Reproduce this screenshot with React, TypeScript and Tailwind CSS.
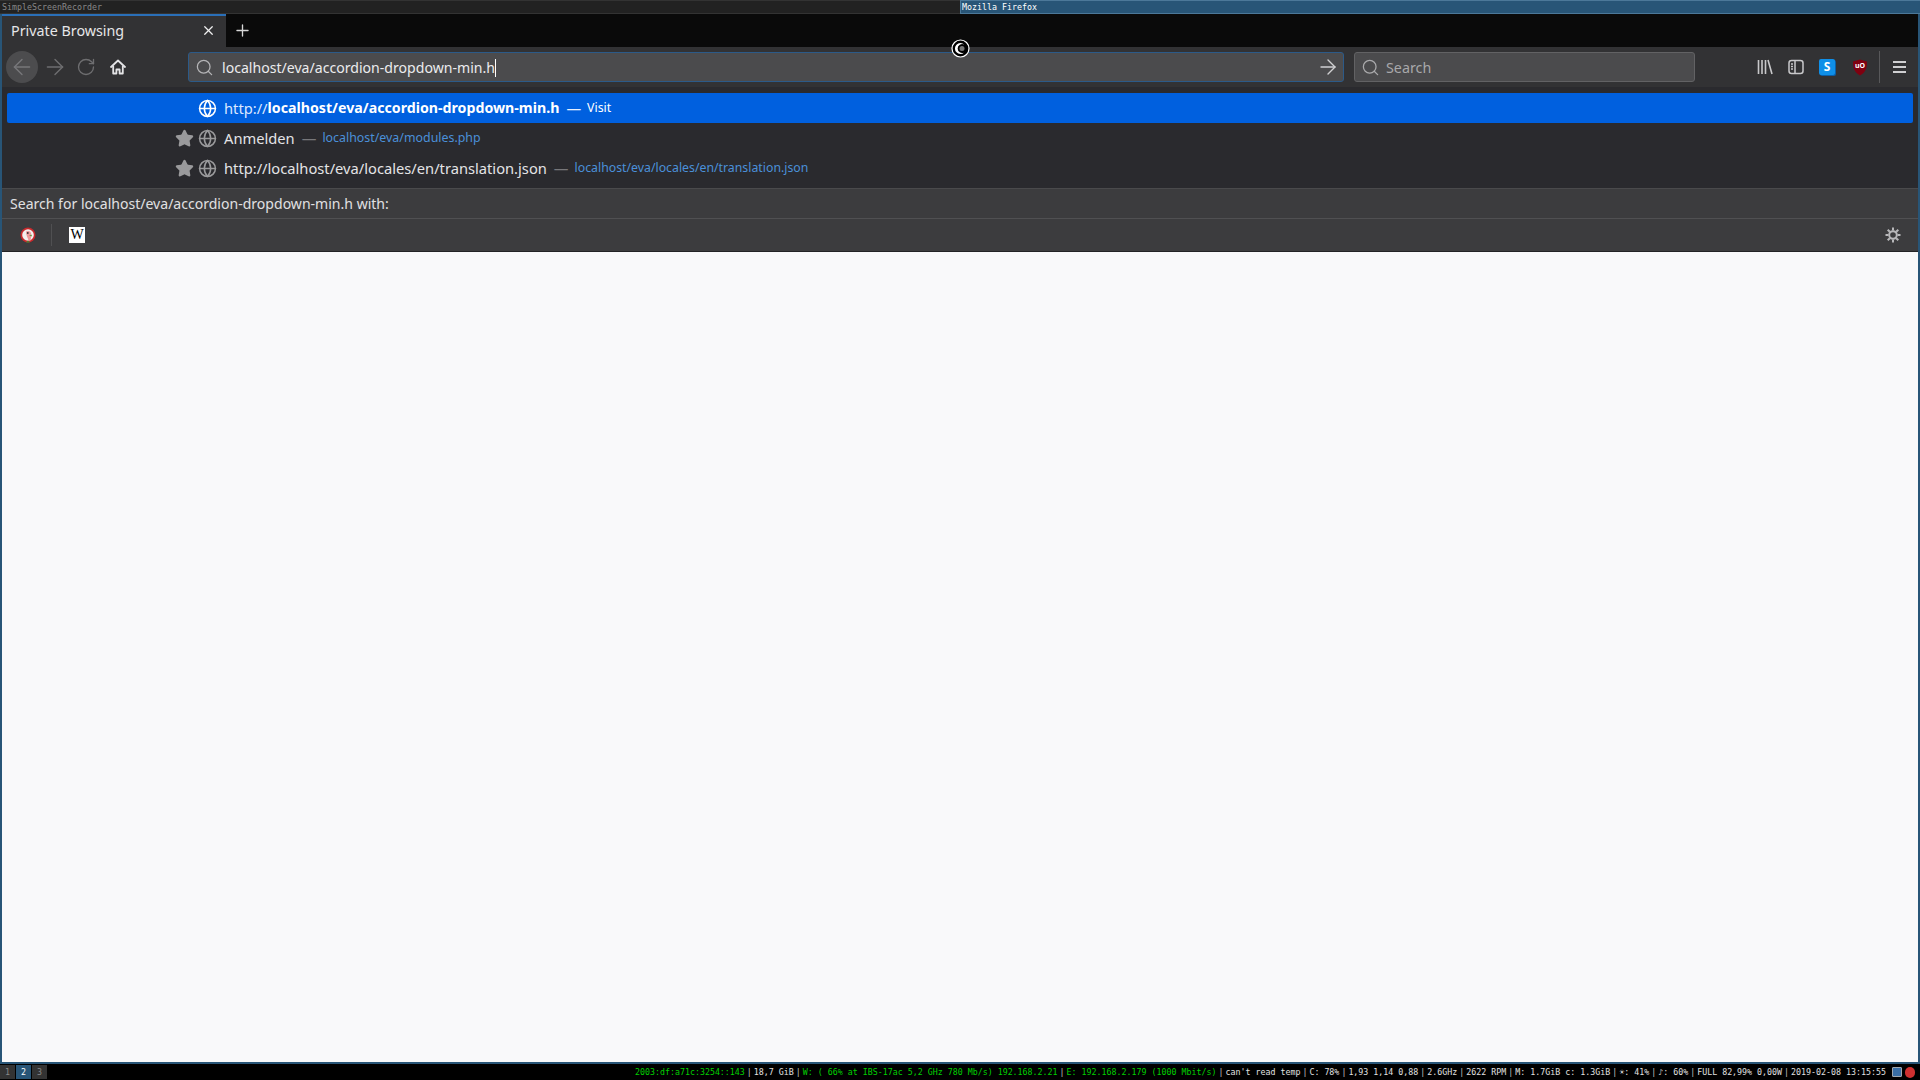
import { ArrowLeft, ArrowRight, Globe, Plus, RotateCw, Search, Star, X } from 'lucide-react';

const sans = "font-['Noto_Sans','Open_Sans',sans-serif]";
const mono = "font-['DejaVu_Sans_Mono',monospace]";

const statusBlocks: { text: string; color: string }[] = [
  { text: '2003:df:a71c:3254::143', color: 'text-[#00d000]' },
  { text: '18,7 GiB', color: 'text-[#e0e0e0]' },
  { text: 'W: ( 66% at IBS-17ac 5,2 GHz 780 Mb/s) 192.168.2.21', color: 'text-[#00d000]' },
  { text: 'E: 192.168.2.179 (1000 Mbit/s)', color: 'text-[#00d000]' },
  { text: "can't read temp", color: 'text-[#e0e0e0]' },
  { text: 'C: 78%', color: 'text-[#e0e0e0]' },
  { text: '1,93 1,14 0,88', color: 'text-[#e0e0e0]' },
  { text: '2.6GHz', color: 'text-[#e0e0e0]' },
  { text: '2622 RPM', color: 'text-[#e0e0e0]' },
  { text: 'M: 1.7GiB c: 1.3GiB', color: 'text-[#e0e0e0]' },
  { text: '☀: 41%', color: 'text-[#e0e0e0]' },
  { text: '♪: 60%', color: 'text-[#e0e0e0]' },
  { text: 'FULL 82,99% 0,00W', color: 'text-[#e0e0e0]' },
  { text: '2019-02-08 13:15:55', color: 'text-[#e0e0e0]' },
];

function HomeIcon() {
  return (
    <svg width="16" height="16" viewBox="0 0 16 16" fill="none" stroke="#e4e4e6" strokeWidth="1.8" strokeLinejoin="round">
      <path d="M1 8 8 1.500 15 8" strokeLinecap="round" />
      <path d="M3.200 6.800V14.500h3.200v-4h3.200v4h3.200V6.800" />
    </svg>
  );
}

function LibraryIcon() {
  return (
    <svg width="16" height="16" viewBox="0 0 16 16" fill="none" stroke="#c8c8ca" strokeWidth="1.6">
      <path d="M1.500 1v14M5 1v14M8.500 1v14M11 1l4 14" />
    </svg>
  );
}

function SidebarIcon() {
  return (
    <svg width="16" height="16" viewBox="0 0 16 16" fill="none" stroke="#c8c8ca" strokeWidth="1.5">
      <rect x="1" y="1.500" width="14" height="13" rx="2.500" />
      <path d="M7 1.500v13M3 5h2M3 7.500h2M3 10h2" />
    </svg>
  );
}

function UblockIcon() {
  return (
    <div className="relative w-4 h-4 flex items-center justify-center">
      <svg width="16" height="17" viewBox="0 0 16 17">
        <path d="M8 .5 15 2.500c0 7-1.500 11-7 14-5.500-3-7-7-7-14z" fill="#800010" />
      </svg>
      <span className={`absolute top-[2px] left-[3px] text-[7px] leading-[10px] font-bold text-white ${sans}`}>uO</span>
    </div>
  );
}

function DuckIcon() {
  return (
    <svg width="16" height="16" viewBox="0 0 16 16">
      <circle cx="8" cy="8" r="7.500" fill="#c8292c" />
      <circle cx="8" cy="8" r="5.800" fill="#f4f0ee" />
      <path d="M6 4.500c2-1.200 4.500-.6 5 1.500.4 2 .3 4.500-.5 7.500H8.500C8 11 5.800 8 6 4.500z" fill="#ee9a9c" />
      <circle cx="7.800" cy="6" r=".9" fill="#333" />
      <path d="M9 8.200 12 7.800 11.500 9.500z" fill="#5a9a3c" />
      <path d="M6 15.500 10 15.500 8 13.500z" fill="#3d8a34" />
    </svg>
  );
}

function GearIcon() {
  return (
    <svg width="16" height="16" viewBox="0 0 16 16" fill="none" stroke="#b8b8ba">
      <circle cx="8" cy="8" r="3.800" strokeWidth="2" />
      <path d="M8 .5v3M8 12.500v3M.5 8h3M12.500 8h3M2.700 2.700l2.100 2.100M11.200 11.200l2.100 2.100M2.700 13.300l2.100-2.100M11.200 4.800l2.100-2.100" strokeWidth="2" />
    </svg>
  );
}

export default function App() {
  return (
    <div className={`relative w-[1920px] h-[1080px] overflow-hidden flex flex-col bg-black ${sans}`}>
      {/* i3 title bars */}
      <div className={`flex h-[14px] text-[8.3px] leading-[12px] ${mono}`}>
        <div className="w-[960px] bg-[#222222] border-y border-[#333333] px-[2px] text-[#888888]">SimpleScreenRecorder</div>
        <div className="flex-1 bg-[#285577] border-y border-[#4c7899] border-l px-[1px] text-white">Mozilla Firefox</div>
      </div>

      <div className="flex-1 flex flex-col border-x-2 border-b-2 border-[#285577] min-h-0">
        {/* tab strip */}
        <div className="h-[33px] flex bg-[#0a0a0a]">
          <div className="w-[224px] bg-[#323234] border-t-2 border-[#2a6fb8] flex items-center pl-[9px] pr-[10px] pb-[2px] text-[#e6e6e8] text-[14.300px]">
            <span className="flex-1">Private Browsing</span>
            <X size={15} color="#f0f0f0" strokeWidth={2} />
          </div>
          <div className="w-[32px] flex items-center justify-center">
            <Plus size={19} color="#d8d8d8" strokeWidth={1.700} />
          </div>
        </div>

        {/* toolbar */}
        <div className="h-[40px] bg-[#323234] flex items-center">
          <div className="w-[32px] h-[32px] ml-[4px] rounded-full bg-[#4c4c4e] flex items-center justify-center">
            <ArrowLeft size={26} color="#77777a" strokeWidth={1.300} />
          </div>
          <div className="w-[32px] ml-[1px] flex justify-center">
            <ArrowRight size={26} color="#6e6e70" strokeWidth={1.300} />
          </div>
          <div className="w-[32px] -ml-[1px] flex justify-center">
            <RotateCw size={20} color="#6e6e70" strokeWidth={1.600} />
          </div>
          <div className="w-[32px] flex justify-center">
            <HomeIcon />
          </div>
          <div className="w-[1156px] h-[30px] ml-[54px] rounded-[3px] border-[1.500px] border-[#2c5a88] bg-[#4b4b4d] flex items-center pl-[6px] pr-[3px] text-[14.100px] text-[#ececee]">
            <Search size={19} color="#b4b4b6" strokeWidth={1.600} />
            <span className="ml-[8px] border-r border-white leading-[18px] mt-[1px]">localhost/eva/accordion-dropdown-min.h</span>
            <ArrowRight size={24} color="#d0d0d2" strokeWidth={1.400} className="ml-auto" />
          </div>
          <div className="w-[341px] h-[30px] ml-[10px] rounded-[3px] border border-[#626264] bg-[#4b4b4d] flex items-center pl-[6px] text-[14.300px] text-[#a8a8aa]">
            <Search size={19} color="#aaaaac" strokeWidth={1.600} />
            <span className="ml-[6px] mt-[1px]">Search</span>
          </div>
          <div className="ml-[62px] w-[16px] flex justify-center"><LibraryIcon /></div>
          <div className="ml-[15px] w-[16px] flex justify-center"><SidebarIcon /></div>
          <div className="ml-[15px] w-[16px] h-[16px] rounded-[2px] bg-[#0f8fe8] shadow-[1px_1px_0_#0a5ea8] flex items-center justify-center text-white text-[12px] leading-none font-bold">S</div>
          <div className="ml-[17px]"><UblockIcon /></div>
          <div className="ml-[11px] w-px h-[32px] bg-[#58585a]" />
          <div className="ml-[13px] flex flex-col gap-[3px]">
            <div className="w-[13px] h-[2px] bg-[#cfcfd1]" />
            <div className="w-[13px] h-[2px] bg-[#cfcfd1]" />
            <div className="w-[13px] h-[2px] bg-[#cfcfd1]" />
          </div>
        </div>

        {/* url dropdown */}
        <div className="h-[101px] bg-[#2a2a2e] pt-[6px] pl-[5px] pr-[5px] text-[14.700px] text-[#e4e4e6]">
          <div className="h-[30px] rounded-[2px] bg-[#0060df] flex items-center pl-[191px] text-white">
            <Globe size={19} color="#ffffff" strokeWidth={1.900} />
            <span className="ml-[7px] font-normal text-[#dce8ff]">http://</span>
            <span className="font-bold text-[14.200px]">localhost/eva/accordion-dropdown-min.h</span>
            <span className="ml-[7px] text-[#e8f0ff]">—</span>
            <span className="ml-[6px] text-[12.300px]">Visit</span>
          </div>
          <div className="h-[30px] flex items-center pl-[168px]">
            <Star size={19} color="#9a9a9c" fill="#9a9a9c" />
            <Globe size={19} color="#9a9a9c" strokeWidth={1.900} className="ml-[4px]" />
            <span className="ml-[7px]">Anmelden</span>
            <span className="ml-[7px] text-[#77777a]">—</span>
            <span className="ml-[6px] text-[12.400px] text-[#4a90d9] mt-[1px]">localhost/eva/modules.php</span>
          </div>
          <div className="h-[30px] flex items-center pl-[168px]">
            <Star size={19} color="#9a9a9c" fill="#9a9a9c" />
            <Globe size={19} color="#9a9a9c" strokeWidth={1.900} className="ml-[4px]" />
            <span className="ml-[7px]">http://localhost/eva/locales/en/translation.json</span>
            <span className="ml-[7px] text-[#77777a]">—</span>
            <span className="ml-[6px] text-[12.300px] text-[#4a90d9] mt-[1px]">localhost/eva/locales/en/translation.json</span>
          </div>
        </div>

        {/* one-off search */}
        <div className="h-[64px] bg-[#3c3c3e] border-t border-[#4a4a4c] border-b border-b-[#232325] flex flex-col">
          <div className="h-[30px] shrink-0 flex items-center pl-[8px] pt-[1px] text-[14.050px] text-[#e0e0e2] border-b border-[#505052]">
            Search for localhost/eva/accordion-dropdown-min.h with:
          </div>
          <div className="flex-1 flex items-center pl-[18px] pr-[17px]">
            <DuckIcon />
            <div className="ml-[15px] w-px h-[22px] bg-[#505052]" />
            <div className="ml-[17px] w-[16px] h-[16px] bg-white flex items-center justify-center text-black text-[14px] leading-none font-['Liberation_Serif',serif]">W</div>
            <div className="ml-auto"><GearIcon /></div>
          </div>
        </div>

        {/* page */}
        <div className="flex-1 bg-[#f9f9fa]" />
      </div>

      {/* i3bar */}
      <div className={`h-[16px] bg-black flex items-center text-[8.3px] leading-[16px] ${mono}`}>
        <div className="flex gap-[1px] h-[14px] text-center leading-[14px]">
          <div className="w-[15px] bg-[#333333] text-[#888888]">1</div>
          <div className="w-[15px] bg-[#285577] text-white">2</div>
          <div className="w-[15px] bg-[#333333] text-[#888888]">3</div>
        </div>
        <div className="ml-auto flex items-center pr-[4px]">
          {statusBlocks.map((b, i) => (
            <span key={b.text} className={`${b.color} whitespace-pre`}>
              {b.text}
              {i < statusBlocks.length - 1 && <span className="text-[#c0c0c0] mx-[2px]">|</span>}
            </span>
          ))}
          <div className="ml-[6px] w-[10px] h-[10px] rounded-[1px] bg-[#3a6ea5] border border-[#a0a8b0]" />
          <div className="ml-[3px] mr-[1px] w-[10px] h-[11px] rounded-full bg-[#d03030]" />
        </div>
      </div>

      {/* mouse busy cursor */}
      <div className="absolute left-[951px] top-[39px] w-[19px] h-[19px]">
        <svg width="19" height="19" viewBox="0 0 19 19">
          <circle cx="9.500" cy="9.500" r="8.500" fill="#000" stroke="#fff" strokeWidth="1.200" />
          <path d="M13.200 5.500A5.500 5.500 0 1 0 13.200 13.500A4.500 4.500 0 1 1 13.200 5.500z" fill="#fff" />
          <circle cx="11" cy="9.500" r="2.500" fill="#777" />
        </svg>
      </div>
    </div>
  );
}
